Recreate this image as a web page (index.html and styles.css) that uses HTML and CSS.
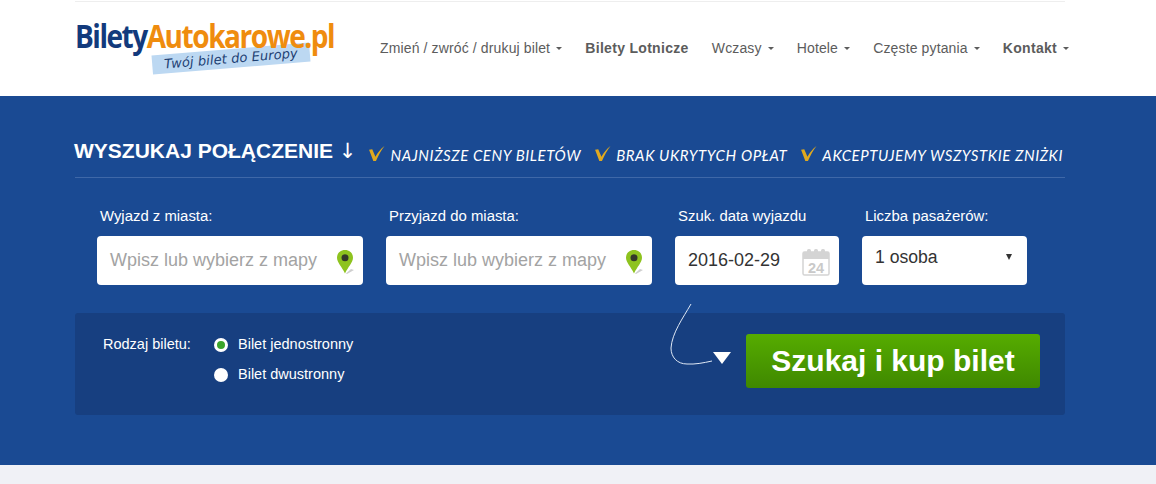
FILE: index.html
```html
<!DOCTYPE html>
<html lang="pl">
<head>
<meta charset="utf-8">
<title>BiletyAutokarowe.pl</title>
<link rel="stylesheet" href="styles.css">
</head>
<body>
<header class="header">
  <div class="wrap header-inner">
    <a class="logo" href="#">
      <span class="logo-name"><span class="logo-blue">Bilety</span><span class="logo-orange">Autokarowe.pl</span></span>
      <span class="logo-tag">Twój bilet do Europy</span>
    </a>
    <nav class="nav">
      <a class="nav-item caret" href="#">Zmień / zwróć / drukuj bilet</a>
      <a class="nav-item strong" href="#">Bilety Lotnicze</a>
      <a class="nav-item caret" href="#">Wczasy</a>
      <a class="nav-item caret" href="#">Hotele</a>
      <a class="nav-item caret" href="#">Częste pytania</a>
      <a class="nav-item strong caret" href="#">Kontakt</a>
    </nav>
  </div>
</header>
<main class="hero">
  <div class="wrap">
    <div class="title-row">
      <h1 class="title">WYSZUKAJ POŁĄCZENIE <span class="title-arrow">↓</span></h1>
      <ul class="perks">
        <li class="perk"><svg class="tick" viewBox="0 0 16 16"><path d="M1 4.500 L4 4 L7 11 C9 7.500 12 3.500 15.500 1 C12.500 5 10 9.500 7.500 15 L5 15 Z" fill="#e0a91f"/></svg>NAJNIŻSZE CENY BILETÓW</li>
        <li class="perk"><svg class="tick" viewBox="0 0 16 16"><path d="M1 4.500 L4 4 L7 11 C9 7.500 12 3.500 15.500 1 C12.500 5 10 9.500 7.500 15 L5 15 Z" fill="#e0a91f"/></svg>BRAK UKRYTYCH OPŁAT</li>
        <li class="perk"><svg class="tick" viewBox="0 0 16 16"><path d="M1 4.500 L4 4 L7 11 C9 7.500 12 3.500 15.500 1 C12.500 5 10 9.500 7.500 15 L5 15 Z" fill="#e0a91f"/></svg>AKCEPTUJEMY WSZYSTKIE ZNIŻKI</li>
      </ul>
    </div>
    <form class="fields">
      <div class="field field-city">
        <label class="label">Wyjazd z miasta:</label>
        <div class="box"><span class="placeholder">Wpisz lub wybierz z mapy</span>
          <svg class="pin" viewBox="0 0 17 24"><path d="M9 23.500 L14 19 L17 20 L10 24 Z" fill="#cfcfcf"/><path d="M8 0 C3.200 0 0 3.400 0 7.800 C0 12.500 5 17 8 23.500 C11 17 16 12.500 16 7.800 C16 3.400 12.800 0 8 0 Z" fill="#8ec31f"/><circle cx="8" cy="7.800" r="3.500" fill="#33382a"/></svg>
        </div>
      </div>
      <div class="field field-city">
        <label class="label">Przyjazd do miasta:</label>
        <div class="box"><span class="placeholder">Wpisz lub wybierz z mapy</span>
          <svg class="pin" viewBox="0 0 17 24"><path d="M9 23.500 L14 19 L17 20 L10 24 Z" fill="#cfcfcf"/><path d="M8 0 C3.200 0 0 3.400 0 7.800 C0 12.500 5 17 8 23.500 C11 17 16 12.500 16 7.800 C16 3.400 12.800 0 8 0 Z" fill="#8ec31f"/><circle cx="8" cy="7.800" r="3.500" fill="#33382a"/></svg>
        </div>
      </div>
      <div class="field field-date">
        <label class="label">Szuk. data wyjazdu</label>
        <div class="box"><span class="value">2016-02-29</span>
          <svg class="cal" viewBox="0 0 28 28"><rect x="1" y="4" width="26" height="23" rx="1.500" fill="#fff" stroke="#d4d4d4" stroke-width="1.500"/><rect x="1" y="4" width="26" height="7" fill="#d4d4d4"/><rect x="5" y="1" width="4" height="7" rx="1.500" fill="#d4d4d4"/><rect x="12" y="1" width="4" height="7" rx="1.500" fill="#d4d4d4"/><rect x="19" y="1" width="4" height="7" rx="1.500" fill="#d4d4d4"/><text x="14" y="24.500" class="cal-num" text-anchor="middle">24</text></svg>
        </div>
      </div>
      <div class="field field-count">
        <label class="label">Liczba pasażerów:</label>
        <div class="box"><span class="value">1 osoba</span><span class="select-caret"></span></div>
      </div>
    </form>
    <section class="panel">
      <span class="panel-label">Rodzaj biletu:</span>
      <div class="radios">
        <div class="radio-row"><span class="radio radio-on"></span>Bilet jednostronny</div>
        <div class="radio-row"><span class="radio"></span>Bilet dwustronny</div>
      </div>
      <svg class="hint" viewBox="0 0 64 63"><path d="M21 1 C13 15 2 30 1 45 C1 54 7 61 17 61 C25 61.500 33 60 42 58" fill="none" stroke="#dfe8f5" stroke-width="1"/><path d="M43 49 L61 49 L52 61 Z" fill="#fff"/></svg>
      <button class="cta" type="button">Szukaj i kup bilet</button>
    </section>
  </div>
</main>
<div class="foot"></div>
</body>
</html>
```
FILE: styles.css
```css
* { box-sizing: border-box; }
html, body { margin: 0; padding: 0; }
body { background: #f0f1f6; font-family: "Liberation Sans", Arial, sans-serif; overflow: hidden; }
.wrap { width: 990px; margin-left: 75px; }
a { text-decoration: none; color: inherit; }

.header { background: #fff; height: 96px; padding-top: 1px; }
.header-inner { height: 95px; border-top: 1px solid #eeeeee; display: flex; align-items: flex-start; }
.logo { position: relative; display: block; width: 290px; flex: none; }
.logo-name { position: relative; z-index: 1; display: block; margin-top: 14px; font: 700 33px/40px "Open Sans", sans-serif; letter-spacing: -1.75px; white-space: nowrap; transform: scaleX(.85); transform-origin: left center; }
.logo-blue { color: #123a7c; }
.logo-orange { color: #ef8c0e; }
.logo-tag { position: absolute; left: 77px; top: 47px; width: 158px; height: 19px; background: #bcd8f2; color: #1d3f72; font: italic 13px/19px "DejaVu Sans", sans-serif; letter-spacing: .1px; text-align: center; white-space: nowrap; transform: rotate(-4.7deg); }

.nav { display: flex; align-items: center; margin-left: 15px; height: 92px; gap: 23.2px; white-space: nowrap; }
.nav-item { font-size: 14px; color: #5c5c5c; letter-spacing: .13px; }
.nav-item.strong { font-weight: 700; letter-spacing: .3px; }
.nav-item.caret::after { content: ""; display: inline-block; margin-left: 6px; vertical-align: 3px; border-left: 3px solid transparent; border-right: 3px solid transparent; border-top: 3px solid #5c5c5c; }

.hero { background: #1a4a93; height: 369px; padding-top: 38px; }
.title-row { display: flex; align-items: flex-start; height: 44px; border-bottom: 1px solid #3f68a8; }
.title { margin: 0 0 0 -1px; font-size: 21px; font-weight: 700; color: #fff; white-space: nowrap; line-height: 34px; }
.title-arrow { font-family: "DejaVu Sans", sans-serif; font-weight: 400; font-size: 21px; }
.perks { list-style: none; margin: 11px 0 0 12px; padding: 0; display: flex; gap: 13px; white-space: nowrap; }
.perk { display: flex; align-items: center; color: #fff; font: italic 15px/20px "Lato", sans-serif; letter-spacing: .58px; }
.tick { width: 17px; height: 17px; margin-right: 5px; margin-top: -4px; }

.fields { display: flex; gap: 23px; margin-left: 22px; margin-top: 28px; }
.label { display: block; margin-left: 3px; color: #fff; font-size: 14.9px; line-height: 20px; height: 30px; white-space: nowrap; }
.box { display: flex; align-items: center; justify-content: space-between; height: 49px; background: #fff; border-radius: 4px; padding: 0 10px 0 13px; }
.field-city { width: 266px; }
.field-date { width: 164px; }
.field-count { width: 165px; }
.placeholder { font-size: 18px; color: #a3a3a3; white-space: nowrap; }
.value { font-size: 18px; color: #333; white-space: nowrap; }
.pin { width: 17px; height: 24px; margin-right: -1px; margin-top: 2px; flex: none; }
.cal { width: 28px; height: 28px; margin-right: -1px; margin-top: 2px; flex: none; }
.cal-num { font: 700 14.5px "Liberation Sans", sans-serif; fill: #c9c9c9; }
.field-count .value { margin-top: -7px; font-size: 17.6px; }
.select-caret { border-left: 3.5px solid transparent; border-right: 3.5px solid transparent; border-top: 6px solid #333; margin-right: 5px; margin-top: -7px; }

.panel { position: relative; display: flex; align-items: flex-start; height: 102px; margin-top: 28px; padding: 21px 25px 0 28px; background: #173f80; border-radius: 3px; }
.panel-label { color: #fff; font-size: 14.5px; line-height: 20px; width: 111px; flex: none; }
.radios { display: flex; flex-direction: column; gap: 10px; }
.radio-row { display: flex; align-items: center; color: #fff; font-size: 14.5px; line-height: 20px; gap: 10px; white-space: nowrap; }
.radio { width: 14px; height: 14px; border-radius: 50%; background: #fff; flex: none; margin-top: 2px; }
.radio-on { background: #3ba52b; border: 3px solid #fff; }
.hint { position: absolute; left: 595px; top: -10px; width: 64px; height: 63px; }
.cta { margin-left: auto; width: 294px; height: 54px; border: 0; border-radius: 3px; background: linear-gradient(#56ac00, #3f8800); color: #fff; font: 700 30px/54px "Liberation Sans", sans-serif; padding: 0; }
.foot { height: 19px; background: #f0f1f6; }
```
